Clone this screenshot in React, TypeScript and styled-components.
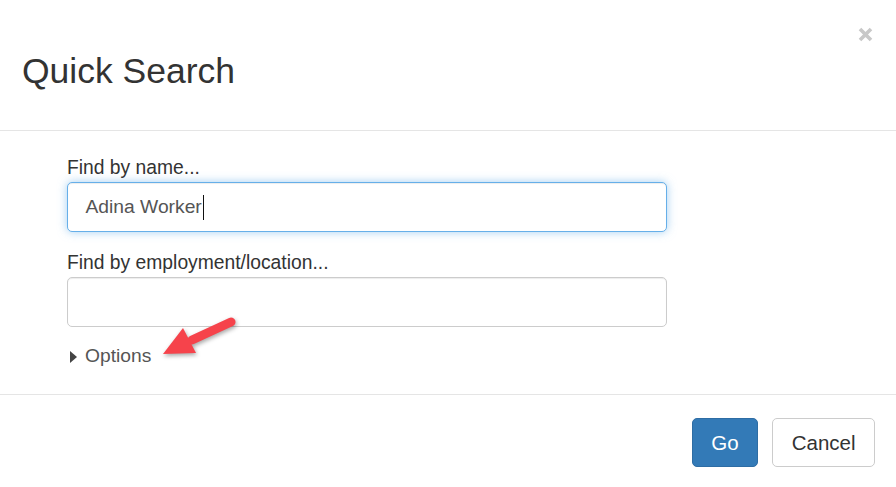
import React from "react";
import styled, { createGlobalStyle } from "styled-components";

const Global = createGlobalStyle`
  html, body { margin: 0; padding: 0; background: #fff; }
  body { font-family: "Liberation Sans", Arial, sans-serif; color: #333; }
  * { box-sizing: border-box; }
`;

const Dialog = styled.div`
  position: relative;
  width: 896px;
  height: 487px;
  background: #fff;
  display: flex;
  flex-direction: column;
  overflow: hidden;
`;

const Header = styled.div`
  height: 131px;
  flex: none;
  border-bottom: 1px solid #e5e5e5;
  display: flex;
  align-items: flex-start;
  justify-content: space-between;
  padding: 0 23px 0 22px;
`;

const Title = styled.h4`
  margin: 52px 0 0 0;
  font-size: 35.5px;
  line-height: 1.1;
  font-weight: 400;
  color: #333;
`;

const CloseButton = styled.button`
  margin-top: 27px;
  width: 15px;
  height: 15px;
  padding: 0;
  border: 0;
  background: transparent;
  display: block;
  cursor: pointer;
  svg { display: block; }
`;

const Body = styled.div`
  flex: 1;
  padding: 23px 0 0 67px;
  display: flex;
  flex-direction: column;
`;

const FormGroup = styled.div<{ $gap?: number }>`
  width: 600px;
  margin-bottom: ${(p) => p.$gap ?? 0}px;
`;

const Label = styled.label`
  display: block;
  font-size: 19.3px;
  line-height: 28px;
  color: #333;
`;

const Field = styled.div<{ $focused?: boolean }>`
  height: 50px;
  width: 600px;
  border: 1px solid ${(p) => (p.$focused ? "#66afe9" : "#ccc")};
  border-radius: 5px;
  background: #fff;
  display: flex;
  align-items: center;
  padding: 0 17.5px;
  font-size: 19.25px;
  color: #555;
  box-shadow: ${(p) =>
    p.$focused
      ? "inset 0 1px 1px rgba(0,0,0,.075), 0 0 10px rgba(102,175,233,.6)"
      : "inset 0 1px 1px rgba(0,0,0,.075)"};
`;

const Caret = styled.span`
  display: inline-block;
  width: 1px;
  height: 25px;
  background: #111;
  margin-left: 1px;
`;

const OptionsRow = styled.div`
  margin-top: 15px;
  display: flex;
  align-items: center;
  gap: 8px;
  height: 28px;
  padding-left: 3px;
  font-size: 19.25px;
  color: #555;
`;

const Triangle = styled.span`
  width: 0;
  height: 0;
  border-top: 6.5px solid transparent;
  border-bottom: 6.5px solid transparent;
  border-left: 7px solid #444;
  margin-top: 1px;
`;

const Footer = styled.div`
  flex: none;
  height: 93px;
  border-top: 1px solid #e5e5e5;
  display: flex;
  justify-content: flex-end;
  align-items: flex-start;
  gap: 14px;
  padding: 23px 21px 0 0;
`;

const Button = styled.button<{ $primary?: boolean }>`
  height: 49px;
  padding: 0 18.5px;
  font-family: "Liberation Sans", Arial, sans-serif;
  font-size: 20.5px;
  border-radius: 5px;
  border: 1px solid ${(p) => (p.$primary ? "#2e6da4" : "#ccc")};
  background: ${(p) => (p.$primary ? "#337ab7" : "#fff")};
  color: ${(p) => (p.$primary ? "#fff" : "#333")};
  cursor: pointer;
`;

const Arrow = styled.svg`
  position: absolute;
  left: 150px;
  top: 310px;
  overflow: visible;
  filter: drop-shadow(1px 2px 2px rgba(0, 0, 0, 0.35));
`;

export default function App() {
  return (
    <>
      <Global />
      <Dialog>
        <Header>
          <Title>Quick Search</Title>
          <CloseButton aria-label="Close">
            <svg width="15" height="15" viewBox="0 0 15 15">
              <path
                d="M2 2 L13 13 M13 2 L2 13"
                stroke="#c8c8c8"
                strokeWidth="3.6"
                strokeLinecap="butt"
              />
            </svg>
          </CloseButton>
        </Header>
        <Body>
          <FormGroup $gap={17}>
            <Label>Find by name...</Label>
            <Field $focused>
              Adina Worker
              <Caret />
            </Field>
          </FormGroup>
          <FormGroup>
            <Label>Find by employment/location...</Label>
            <Field />
          </FormGroup>
          <OptionsRow>
            <Triangle />
            Options
          </OptionsRow>
        </Body>
        <Footer>
          <Button $primary>Go</Button>
          <Button>Cancel</Button>
        </Footer>
        <Arrow width="95" height="55" viewBox="0 0 95 55">
          <path
            d="M81 12 L42 30"
            stroke="#f6434b"
            strokeWidth="9"
            strokeLinecap="round"
          />
          <polygon points="33,18 13,44 46,43" fill="#f6434b" />
        </Arrow>
      </Dialog>
    </>
  );
}
